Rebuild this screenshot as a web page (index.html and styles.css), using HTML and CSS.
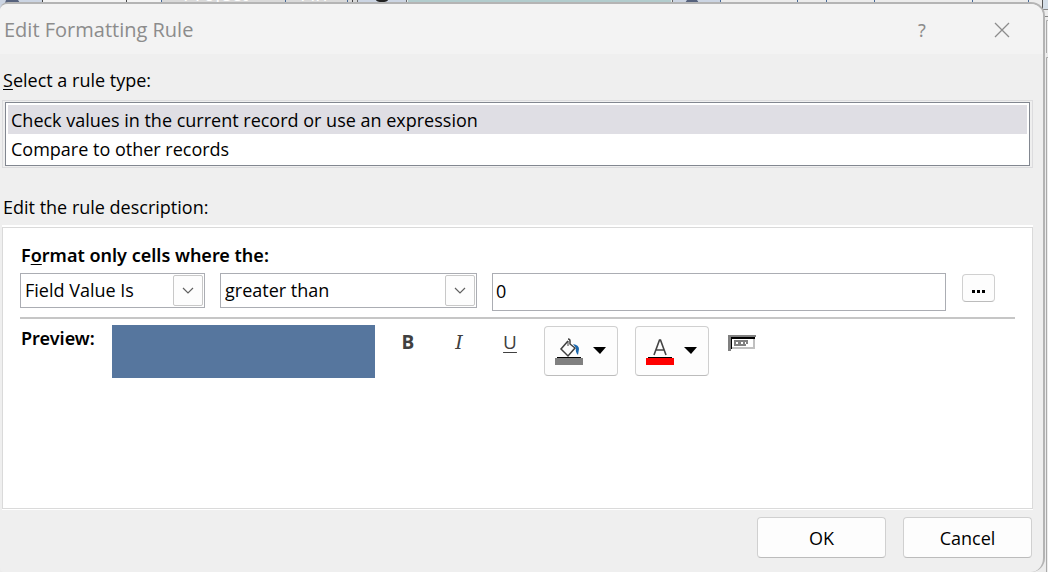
FILE: index.html
```html
<!DOCTYPE html>
<html lang="en">
<head>
<meta charset="utf-8">
<meta name="viewport" content="width=device-width, initial-scale=1">
<title>Edit Formatting Rule</title>
<link rel="stylesheet" href="styles.css">
</head>
<body>
<svg class="backdrop" aria-hidden="true">
  <rect width="100%" height="100%" fill="#ececec"/>
  <rect width="42" height="10" fill="#ccd5e3"/>
  <path d="M6 0h12l2 3H5z" fill="#56627d"/>
  <rect x="43" width="118" height="4" fill="#f4f4f4"/>
  <path d="M49 2.500H160" stroke="#555" stroke-dasharray="1 5"/>
  <rect x="162" width="195" height="4" fill="#d9d9d9"/>
  <path d="M42.500 0v4M126.500 0v4M352.500 0v4" stroke="#444"/>
  <path d="M161.500 0v4M285.500 0v4M347.500 0v4" stroke="#476996"/>
  <text x="183" y="1" class="backdrop-text">Project</text>
  <text x="300" y="1" class="backdrop-text">Fin</text>
  <rect x="358" width="48" height="4" fill="#ccd5e3"/>
  <ellipse cx="382" cy="0" rx="6" ry="2" fill="#222"/>
  <rect x="408" width="263" height="4" fill="#b2cccd"/>
  <path d="M357.500 0v4M406.500 0v4M672.500 0v4" stroke="#666"/>
  <rect x="673" width="47" height="4" fill="#ccd5e3"/>
  <path d="M687 0h10l2 3h-14z" fill="#56627d"/>
  <path d="M720.500 0v4M797.500 0v4M826.500 0v4M874.500 0v4M972.500 0v4M1028.500 0v4" stroke="#476996"/>
  <rect x="1042" width="1" height="16" fill="#555"/>
  <rect x="1043" width="200" height="9" fill="#d5dfe9"/>
  <path d="M1043 9.500h200M1043 16.500h200" stroke="#888"/>
  <path d="M1046.500 53V20.500h200M1046.500 572V57.500h200" stroke="#aaa" fill="none"/>
</svg>
<main class="dialog" role="dialog" aria-labelledby="dialog-title">
  <header class="titlebar">
    <h1 class="title" id="dialog-title">Edit Formatting Rule</h1>
    <button class="title-button" type="button" aria-label="Help"><span class="help-mark">?</span></button>
    <button class="title-button" type="button" aria-label="Close">
      <svg width="16" height="16" viewBox="0 0 16 16" aria-hidden="true"><path d="M1 1l14 14M15 1L1 15" stroke="#8c8c8c" stroke-width="1.300"/></svg>
    </button>
  </header>
  <form class="content">
    <label class="section-label" for="rule-type"><u>S</u>elect a rule type:</label>
    <div class="list-frame">
      <select class="rule-list" id="rule-type" size="2">
        <option selected>Check values in the current record or use an expression</option>
        <option>Compare to other records</option>
      </select>
    </div>
    <h2 class="section-label description-label">Edit the rule description:</h2>
    <section class="panel">
      <h3 class="strong-label">F<u>o</u>rmat only cells where the:</h3>
      <div class="condition">
        <div class="combo combo-field">
          <select class="combo-select" aria-label="Condition type"><option>Field Value Is</option></select>
          <span class="combo-arrow"><svg width="12" height="7" viewBox="0 0 12 7" aria-hidden="true"><path d="M1 1l5 5 5-5" fill="none" stroke="#606060" stroke-width="1.200"/></svg></span>
        </div>
        <div class="combo combo-operator">
          <select class="combo-select" aria-label="Operator"><option>greater than</option></select>
          <span class="combo-arrow"><svg width="12" height="7" viewBox="0 0 12 7" aria-hidden="true"><path d="M1 1l5 5 5-5" fill="none" stroke="#606060" stroke-width="1.200"/></svg></span>
        </div>
        <input class="value-input" type="text" value="0" aria-label="Value">
        <button class="button builder" type="button" aria-label="Open expression builder">
          <svg width="13" height="3" viewBox="0 0 13 3" aria-hidden="true"><path d="M0 0h3v3H0zM5 0h3v3H5zM10 0h3v3h-3z"/></svg>
        </button>
      </div>
      <hr class="divider">
      <div class="preview-row">
        <h3 class="strong-label preview-label">Preview:</h3>
        <div class="swatch" role="img" aria-label="Format preview"></div>
        <div class="styles">
          <button class="style-button bold" type="button" aria-label="Bold">B</button>
          <button class="style-button italic" type="button" aria-label="Italic">I</button>
          <button class="style-button underline" type="button" aria-label="Underline">U</button>
        </div>
        <button class="button color-button" type="button" aria-label="Background color">
          <svg width="52" height="28" viewBox="0 0 52 28" aria-hidden="true">
            <path d="M13 3L6 11l7 7 7-8-5-4V3q0-2-2-2" fill="none" stroke="#404040" stroke-width="1.500"/>
            <path d="M13 3v5" stroke="#404040"/>
            <path d="M18 6q6 1 6 5l-1 6q-3-3-2-7z" fill="#1b68ae"/>
            <path d="M2 19h24v1H2z"/>
            <path d="M0 20h28v7H0z" fill="#808080"/>
            <path d="M38 9h13l-6 7z"/>
          </svg>
        </button>
        <button class="button color-button" type="button" aria-label="Font color">
          <svg width="52" height="28" viewBox="0 0 52 28" aria-hidden="true">
            <path d="M8 17L13.500 2h1L20 17M10 12h8" fill="none" stroke="#444" stroke-width="1.600"/>
            <path d="M2 19h24v1H2z"/>
            <path d="M0 20h28v7H0z" fill="#f00"/>
            <path d="M38 9h13l-6 7z"/>
          </svg>
        </button>
        <button class="enable-button" type="button" aria-label="Enabled">
          <svg width="28" height="16" viewBox="0 0 28 16" aria-hidden="true">
            <path d="M0 0h28v2H3v14H0z" fill="#808080"/>
            <path d="M3 2h24v2H4v10H3z"/>
            <path d="M25 4h2v10H4v-2h21z" fill="#c0c0c0"/>
            <path d="M6 5h14v4h-2v2H6z" fill="#808080"/>
            <path d="M8 7h2v2H8zM13 7h2v2h-2zM17 7h1v2h-1z" fill="#fff"/>
          </svg>
        </button>
      </div>
    </section>
    <footer class="actions">
      <button class="button action" type="button">OK</button>
      <button class="button action" type="button">Cancel</button>
    </footer>
  </form>
</main>
</body>
</html>
```
FILE: styles.css
```css
* {
  box-sizing: border-box;
}

body {
  margin: 0;
  min-height: 100vh;
  padding: 2px 3px 0 0;
  background: #dedede;
  color: #000;
  font: 18px/24px "Open Sans", "Noto Sans", sans-serif;
}

button,
input,
select {
  font: inherit;
  color: inherit;
}

h1,
h2,
h3 {
  margin: 0;
  font: inherit;
}

u {
  text-underline-offset: 2px;
  text-decoration-thickness: 1px;
}

.backdrop {
  position: absolute;
  inset: 0;
  z-index: -1;
  width: 100%;
  height: 100%;
}

.backdrop-text {
  font-size: 20px;
  fill: #fff;
}

.dialog {
  display: flex;
  flex-direction: column;
  min-height: calc(100vh - 2px);
  border: solid #b4b4b4;
  border-width: 2px 2px 0 0;
  border-radius: 8px 14px 14px 4px;
  background: #efefef;
  overflow: hidden;
}

.titlebar {
  display: flex;
  align-items: center;
  height: 50px;
  padding: 1px 17px 0 4px;
  background: #f3f3f3;
  color: #8c8c8c;
}

.title {
  flex: 1;
  font-size: 20px;
}

.title-button {
  display: flex;
  align-items: center;
  justify-content: center;
  width: 48px;
  height: 48px;
  margin-left: 32px;
  padding: 0;
  border: 0;
  background: none;
}

.help-mark {
  font-family: "Noto Sans", sans-serif;
}

.content {
  display: flex;
  flex: 1;
  flex-direction: column;
  padding: 14px 10px 14px 2px;
}

.section-label {
  padding-left: 1px;
}

.list-frame {
  margin-top: 8px;
  padding: 1px 2px;
  border: 1px solid #dcdcde;
}

.rule-list {
  display: block;
  width: 100%;
  height: 64px;
  padding: 2px;
  border: 1px solid #828790;
  border-radius: 0;
  outline: 0;
  background: #fff;
  overflow: hidden;
}

.rule-list option {
  min-height: 29px;
  padding: 3px 3px 1px;
  line-height: 25px;
}

.rule-list option:checked {
  background: #dfdee4 linear-gradient(#dfdee4, #dfdee4);
  color: #000;
}

.description-label {
  margin-top: 27px;
}

.panel {
  flex: 1;
  margin-top: 8px;
  padding: 15px 17px 16px 17px;
  border: 1px solid #dadada;
  background: #fff;
  box-shadow: 0 -2px #fff, 0 1px #fff;
}

.strong-label {
  padding-left: 1px;
  font-family: "Noto Sans", "Open Sans", sans-serif;
  font-weight: 600;
}

.condition {
  display: flex;
  align-items: flex-start;
  gap: 15px;
  margin-top: 6px;
}

.combo {
  display: grid;
  height: 35px;
  border: 1px solid #abadb3;
}

.combo-field {
  width: 185px;
}

.combo-operator {
  width: 257px;
}

.combo-select {
  grid-area: 1 / 1;
  width: 100%;
  padding: 0 32px 2px 4px;
  border: 0;
  background: #fff;
  appearance: none;
}

.combo-arrow {
  display: flex;
  grid-area: 1 / 1;
  align-items: center;
  justify-content: center;
  justify-self: end;
  width: 30px;
  margin: 1px;
  border: 1px solid #c8c8c8;
  border-radius: 2px;
  background: #fdfdfd;
  pointer-events: none;
}

.value-input {
  flex: 1;
  min-width: 80px;
  height: 38px;
  padding: 0 3px 2px;
  border: 1px solid #abadb3;
}

.button {
  display: flex;
  align-items: center;
  justify-content: center;
  padding: 0;
  border: 1px solid #d0d0d0;
  border-bottom-color: #bcbcbc;
  border-radius: 4px;
  background: #fdfdfd;
}

.builder {
  width: 33px;
  height: 28px;
  margin: 1px 20px 0 1px;
  padding-top: 6px;
}

.divider {
  height: 2px;
  margin: 6px 0;
  border: 0;
  background: #c6c6c6;
}

.preview-row {
  display: flex;
  align-items: flex-start;
}

.preview-label {
  width: 92px;
  padding-top: 1px;
}

.swatch {
  width: 263px;
  height: 53px;
  background: #56769e;
}

.styles {
  display: flex;
  gap: 19px;
  margin: 0 18px 0 17px;
}

.style-button {
  width: 32px;
  height: 34px;
  padding: 0;
  border: 0;
  background: none;
  color: #404040;
  font-size: 19px;
}

.bold {
  font-weight: 700;
}

.italic {
  font-family: "DejaVu Serif", "Liberation Serif", serif;
  font-style: italic;
}

.underline {
  text-decoration: underline 1px;
  text-underline-offset: 3px;
}

.color-button {
  width: 74px;
  height: 50px;
  margin: 1px 17px 0 0;
  padding-top: 1px;
}

.enable-button {
  display: flex;
  margin: 10px 0 0 2px;
  padding: 0;
  border: 0;
  background: none;
}

.actions {
  display: flex;
  justify-content: flex-end;
  gap: 17px;
  margin: 8px 1px 0 0;
}

.action {
  width: 129px;
  height: 41px;
}
```
